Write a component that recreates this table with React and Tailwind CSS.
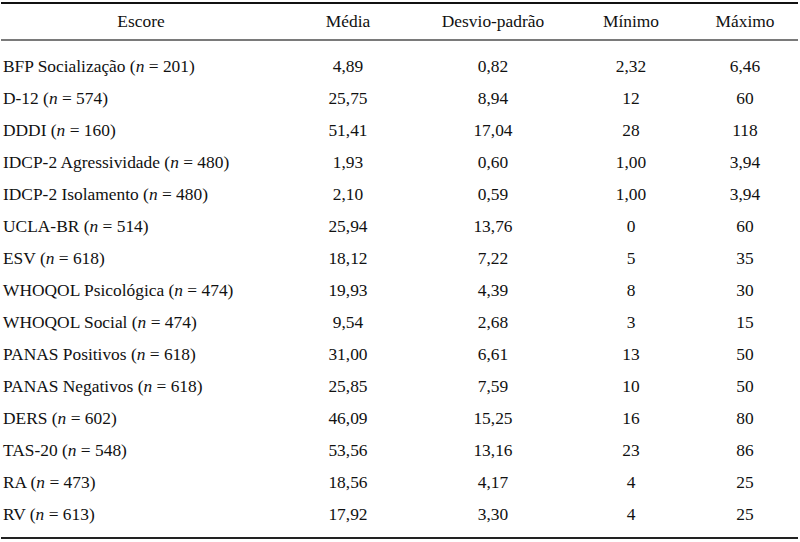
import React from "react";

const rows = [
  ["BFP Socialização", "201", "4,89", "0,82", "2,32", "6,46"],
  ["D-12", "574", "25,75", "8,94", "12", "60"],
  ["DDDI", "160", "51,41", "17,04", "28", "118"],
  ["IDCP-2 Agressividade", "480", "1,93", "0,60", "1,00", "3,94"],
  ["IDCP-2 Isolamento", "480", "2,10", "0,59", "1,00", "3,94"],
  ["UCLA-BR", "514", "25,94", "13,76", "0", "60"],
  ["ESV", "618", "18,12", "7,22", "5", "35"],
  ["WHOQOL Psicológica", "474", "19,93", "4,39", "8", "30"],
  ["WHOQOL Social", "474", "9,54", "2,68", "3", "15"],
  ["PANAS Positivos", "618", "31,00", "6,61", "13", "50"],
  ["PANAS Negativos", "618", "25,85", "7,59", "10", "50"],
  ["DERS", "602", "46,09", "15,25", "16", "80"],
  ["TAS-20", "548", "53,56", "13,16", "23", "86"],
  ["RA", "473", "18,56", "4,17", "4", "25"],
  ["RV", "613", "17,92", "3,30", "4", "25"],
];

const cols = "grid grid-cols-[280px_134px_156px_120px_108px]";

export default function App() {
  return (
    <div className="w-[800px] h-[542px] bg-white pt-[2px] pl-[1px] pr-[2px] font-['Liberation_Serif'] text-[17.4px] text-[#111]">
      <div className="border-t-2 border-[#111]">
        <div className={`${cols} h-[37px] items-center border-b-2 border-[#7a7a7a]`}>
          <div className="text-center">Escore</div>
          <div className="text-center">Média</div>
          <div className="text-center">Desvio-padrão</div>
          <div className="text-center">Mínimo</div>
          <div className="text-center">Máximo</div>
        </div>
        <div className="pt-[9px] pb-[7px] border-b-2 border-[#222]">
          {rows.map((r) => (
            <div key={r[0]} className={`${cols} h-[32px] items-center`}>
              <div className="pl-[2px] whitespace-nowrap">
                {r[0]} (<i>n</i> = {r[1]})
              </div>
              <div className="text-center">{r[2]}</div>
              <div className="text-center">{r[3]}</div>
              <div className="text-center">{r[4]}</div>
              <div className="text-center">{r[5]}</div>
            </div>
          ))}
        </div>
      </div>
    </div>
  );
}
